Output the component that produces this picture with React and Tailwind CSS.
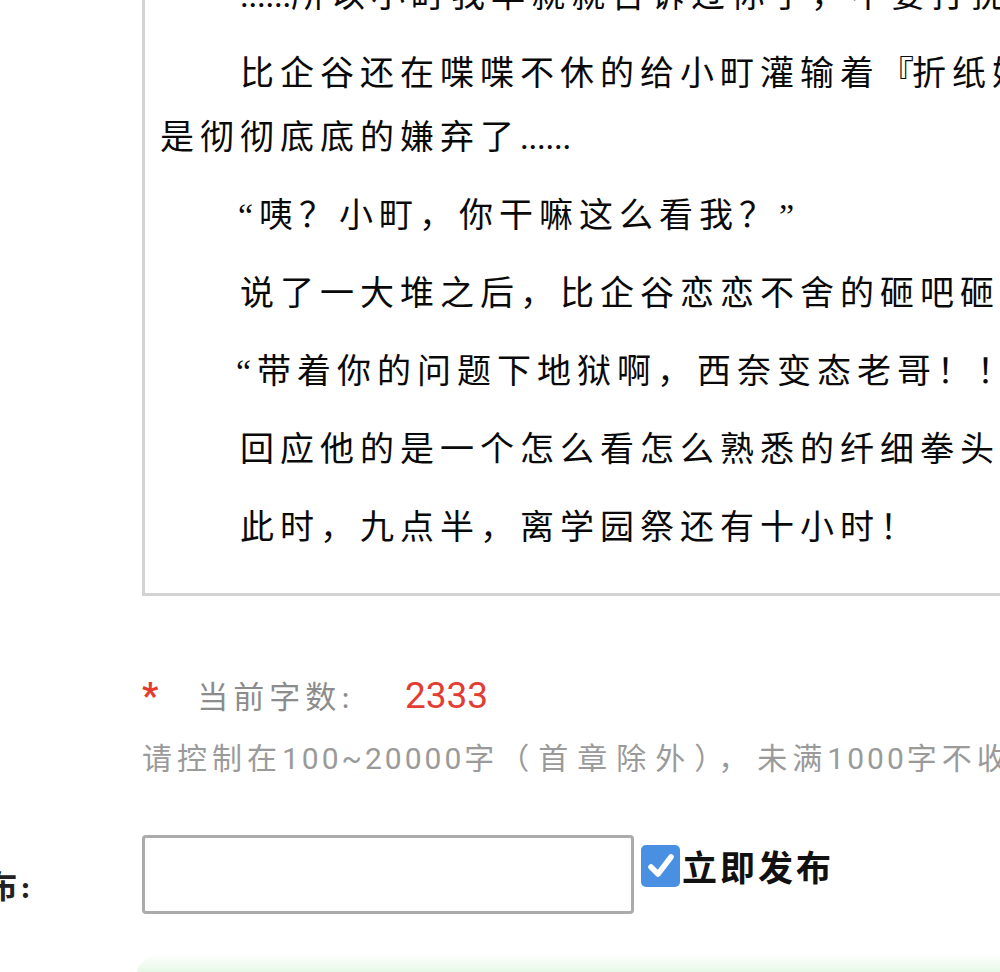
import React from "react";

const kai = "font-['Liberation_Serif','Noto_Sans_CJK_SC',serif]";
const sans = "font-['Roboto','Noto_Sans_CJK_SC',sans-serif]";

const Dots = () => <span className="tracking-normal">......</span>;
const Num = ({ children }) => <span className="tracking-[3px]">{children}</span>;

export default function App() {
  return (
    <div className="w-[1000px] h-[972px] overflow-hidden bg-white">
      {/* chapter text box */}
      <div
        className={`-mt-[59px] ml-[142px] w-[1000px] border-[3px] border-[#d3d3d3] bg-white pt-[20px] pb-[33px] pl-[15px] flex flex-col gap-[14px] text-[34px] leading-[64px] tracking-[6px] text-[#0a0a0a] whitespace-nowrap ${kai}`}
      >
        <p className="indent-[80px]">
          <Dots />所以小町我早就就告诉过你了，不要打扰
        </p>
        <p className="indent-[80px]">
          比企谷还在喋喋不休的给小町灌输着<span className="tracking-[-2px]">『</span>折纸妹妹』的知识
          <br />
          是彻彻底底的嫌弃了<Dots />
        </p>
        <p className="indent-[78px]">“咦？小町，你干嘛这么看我？”</p>
        <p className="indent-[80px]">说了一大堆之后，比企谷恋恋不舍的砸吧砸吧嘴</p>
        <p className="indent-[76px]">“带着你的问题下地狱啊，西奈变态老哥！！！”</p>
        <p className="indent-[80px]">回应他的是一个怎么看怎么熟悉的纤细拳头！</p>
        <p className="indent-[80px]">此时，九点半，离学园祭还有十小时！</p>
      </div>

      {/* word count */}
      <div className="pl-[142px]">
        <div className="mt-[78px] flex items-baseline whitespace-nowrap">
          <span className={`text-[36px] leading-[44px] font-bold text-[#e53b2f] ${sans}`}>*</span>
          <span className={`ml-[39px] text-[31px] leading-[44px] tracking-[5px] text-[#8c8c8c] ${kai}`}>
            当前字数:
          </span>
          <span className={`ml-[50px] text-[37px] leading-[44px] text-[#e23d33] ${sans}`}>2333</span>
        </div>
        <p className={`mt-[17px] text-[30px] leading-[44px] tracking-[5px] text-[#9a9a9a] whitespace-nowrap ${sans}`}>
          请控制在<Num>100~20000</Num>字<span className="tracking-[9px]">（首章除外），</span>未满<Num>1000</Num>字不收费
        </p>
      </div>

      {/* publish row */}
      <div className="mt-[54px] flex items-start">
        <div className="w-[142px] shrink-0 flex justify-end pr-[108px] mt-[30px]">
          <span className={`whitespace-nowrap text-[32px] leading-[44px] font-bold tracking-[3px] text-[#222] ${kai}`}>
            定时发布:
          </span>
        </div>
        <div className="w-[492px] h-[79px] shrink-0 border-[3px] border-[#ababab] rounded-[4px] bg-white" />
        <div className="ml-[7px] mt-[10px] w-[39px] h-[42px] shrink-0 rounded-[5px] bg-[#4a90e2] flex items-center justify-center">
          <svg width="30" height="30" viewBox="0 0 30 30">
            <path
              d="M5 16 L12 23 L25 6"
              fill="none"
              stroke="white"
              strokeWidth="5.5"
              strokeLinecap="round"
              strokeLinejoin="round"
            />
          </svg>
        </div>
        <span className={`ml-[2px] mt-[13px] whitespace-nowrap text-[35px] leading-[44px] font-bold tracking-[3px] text-[#111] ${kai}`}>
          立即发布
        </span>
      </div>

      {/* top of submit button */}
      <div className="mt-[40px] ml-[136px] h-[24px] rounded-tl-[24px] bg-linear-to-b from-white to-[#dff6df]" />
    </div>
  );
}
